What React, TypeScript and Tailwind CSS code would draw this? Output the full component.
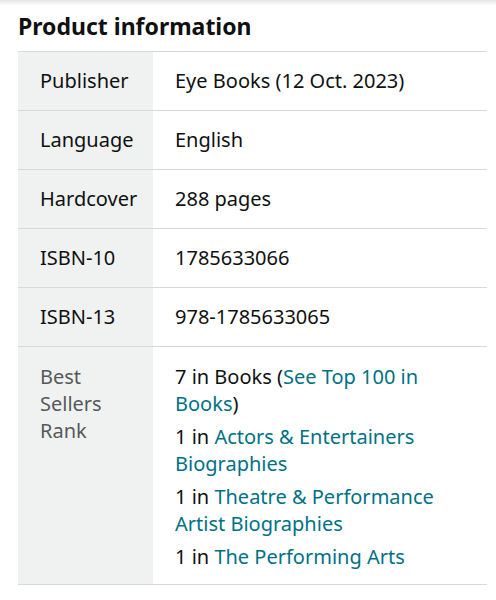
const rows = [
  { label: "Publisher", value: "Eye Books (12 Oct. 2023)" },
  { label: "Language", value: "English" },
  { label: "Hardcover", value: "288 pages" },
  { label: "ISBN-10", value: "1785633066" },
  { label: "ISBN-13", value: "978-1785633065" },
];

const ranks = [
  { pre: "1 in ", link: "Actors & Entertainers Biographies" },
  { pre: "1 in ", link: "Theatre & Performance Artist Biographies" },
  { pre: "1 in ", link: "The Performing Arts" },
];

const App = () => {
  return (
    <div className="w-[496px] h-[600px] bg-white font-['Noto_Sans',sans-serif] text-[#0f1111] overflow-hidden">
      <div className="h-[6px] bg-gradient-to-b from-[#e6e6e6] to-white" />
      <div className="px-[18px] pt-[5px]">
        <h2 className="text-[23px] font-bold leading-[30px] pb-[10px]">Product information</h2>
        <table className="w-[469px] border-collapse text-[20px]">
          <tbody>
            {rows.map((r) => (
              <tr key={r.label} className="border-t border-[#d5d9d9] h-[59px]">
                <td className="bg-[#f0f2f2] w-[135px] pl-[22px] align-middle">{r.label}</td>
                <td className="pl-[22px] align-middle">{r.value}</td>
              </tr>
            ))}
            <tr className="border-t border-b border-[#d5d9d9]">
              <td className="bg-[#f0f2f2] w-[135px] pl-[22px] pt-[16px] align-top text-[#565959] leading-[27px]">
                Best
                <br />
                Sellers
                <br />
                Rank
              </td>
              <td className="pl-[22px] pr-[24px] pt-[16px] pb-[14px] align-top leading-[27px]">
                <div>
                  7 in Books (<span className="text-[#007185]">See Top 100 in Books</span>)
                </div>
                {ranks.map((k) => (
                  <div key={k.link} className="mt-[6px]">
                    {k.pre}
                    <span className="text-[#007185]">{k.link}</span>
                  </div>
                ))}
              </td>
            </tr>
          </tbody>
        </table>
      </div>
    </div>
  );
};

export default App;
